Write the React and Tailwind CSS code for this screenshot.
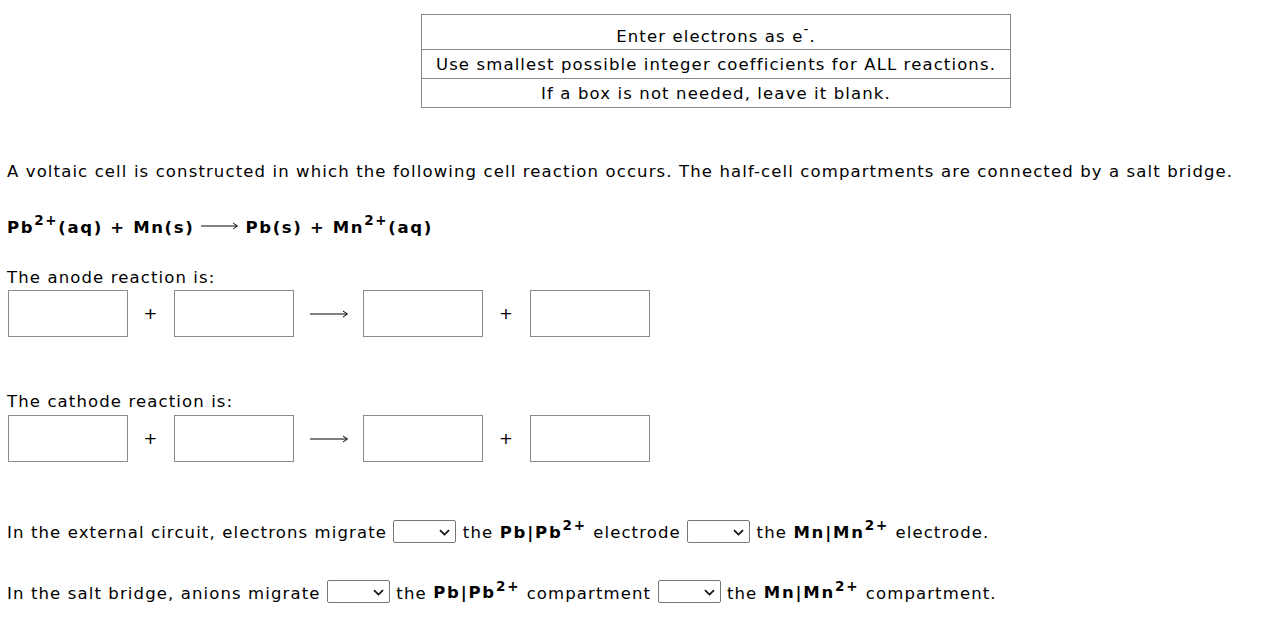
import React from 'react';

function Sup({ children }) {
  return <sup className="text-[13.5px] relative top-[-1px] align-super leading-none">{children}</sup>;
}

function Box() {
  return <input type="text" className="w-[120px] h-[47px] border border-[#8a8a8a] bg-white outline-none" />;
}

function Plus({ w }) {
  return <div className={w + ' flex justify-center'}>+</div>;
}

function Arrow({ w = 'w-[38px]' }) {
  return (
    <svg className={w} height="10" viewBox="0 0 38 10">
      <line x1="0" y1="5" x2="37" y2="5" stroke="#000" strokeWidth="1" />
      <path d="M33 2 L37.5 5 L33 8" fill="none" stroke="#000" strokeWidth="1" />
    </svg>
  );
}

function Pick() {
  return (
    <span className="relative inline-block align-middle w-[63px] h-[23px] border border-[#767676] rounded-[2px] bg-white top-[-2px]">
      <svg className="absolute right-[5px] top-[8px]" width="11" height="7" viewBox="0 0 11 7">
        <path d="M1 1.2 L5.5 5.5 L10 1.2" fill="none" stroke="#111" strokeWidth="1.7" />
      </svg>
    </span>
  );
}

function B({ children }) {
  return <b className="tracking-[1.8px]">{children}</b>;
}

function Reaction({ mt }) {
  return (
    <div className={mt + ' flex items-center ml-[1px]'}>
      <Box />
      <Plus w="w-[46px]" />
      <Box />
      <div className="w-[69px] flex justify-center">
        <Arrow />
      </div>
      <Box />
      <Plus w="w-[47px]" />
      <Box />
    </div>
  );
}

export default function App() {
  return (
    <div
      className="min-h-[631px] bg-white text-black text-[16.5px] tracking-[1.12px] leading-[20px] px-[7px] pt-[14px]"
      style={{ fontFamily: '"DejaVu Sans", Verdana, sans-serif' }}
    >
      {/* instructions table */}
      <div className="ml-[414px] w-[590px] border border-[#8a8a8a] text-center">
        <div className="pt-[9px] pb-[2px] border-b border-[#8a8a8a]">
          Enter electrons as e<Sup>-</Sup>.
        </div>
        <div className="pt-[5px] pb-[3px] border-b border-[#8a8a8a]">
          Use smallest possible integer coefficients for ALL reactions.
        </div>
        <div className="pt-[5px] pb-[3px]">If a box is not needed, leave it blank.</div>
      </div>

      <p className="mt-[54px]">
        A voltaic cell is constructed in which the following cell reaction occurs. The half-cell compartments are connected by a salt bridge.
      </p>

      <p className="mt-[33px] font-bold tracking-[1.65px] flex items-center">
        <span>Pb<Sup>2+</Sup>(aq) + Mn(s)</span>
        <span className="mx-[7px] flex">
          <Arrow w="w-[37px]" />
        </span>
        <span>Pb(s) + Mn<Sup>2+</Sup>(aq)</span>
      </p>

      <p className="mt-[31px]">The anode reaction is:</p>
      <Reaction mt="mt-[2px]" />

      <p className="mt-[55px]">The cathode reaction is:</p>
      <Reaction mt="mt-[3px]" />

      <p className="mt-[58px]">
        In the external circuit, electrons migrate <Pick /> the <B>Pb|Pb<Sup>2+</Sup></B> electrode <Pick /> the <B>Mn|Mn<Sup>2+</Sup></B> electrode.
      </p>

      <p className="mt-[36px]">
        In the salt bridge, anions migrate <Pick /> the <B>Pb|Pb<Sup>2+</Sup></B> compartment <Pick /> the <B>Mn|Mn<Sup>2+</Sup></B> compartment.
      </p>
    </div>
  );
}
